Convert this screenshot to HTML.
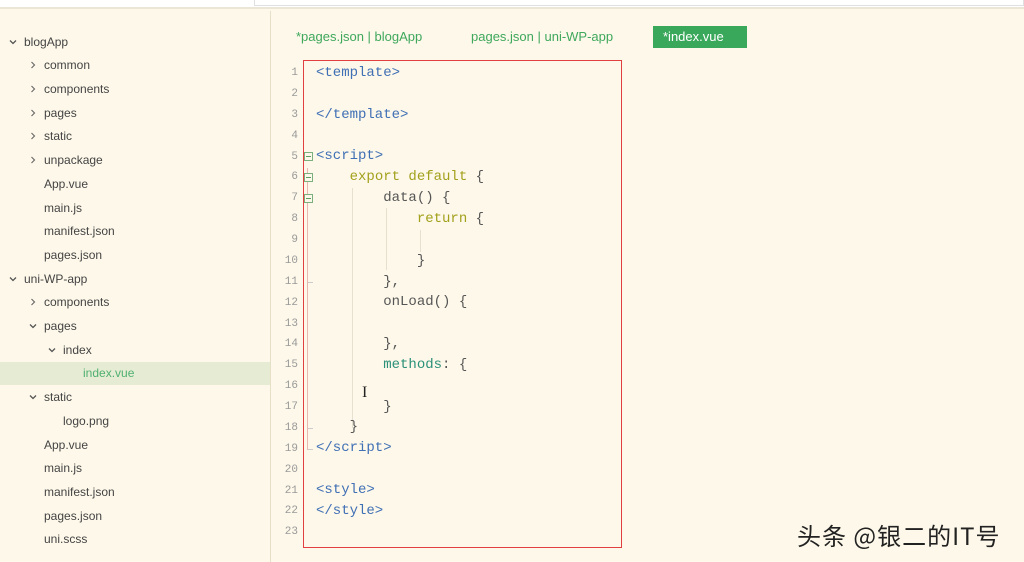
<!DOCTYPE html>
<html><head><meta charset="utf-8"><style>
*{margin:0;padding:0;box-sizing:border-box}
body{width:1024px;height:562px;overflow:hidden;background:#fdf8e9;position:relative;font-family:"Liberation Sans","Noto Sans CJK SC",sans-serif}
.top{position:absolute;left:0;top:0;width:1024px;height:9px;background:#fff;border-bottom:2px solid #ebe6d6}
.topbox{position:absolute;left:254px;top:0;width:770px;height:6px;border:1px solid #e0e0e0;border-top:none;background:#fff}
.side{position:absolute;left:0;top:11px;width:271px;height:551px;border-right:1px solid #e6e0c8}
.it{position:absolute;font-size:12px;color:#444;height:23px;line-height:23px;white-space:nowrap}
.ar{position:absolute;width:8px;height:8px}
.sel{position:absolute;left:0;top:362px;width:270px;height:23px;background:#e6ebd3}
.tab{position:absolute;top:26px;font-size:13px;color:#3fa85d;height:22px;line-height:22px}
.act{background:#3aa85b;color:#fff;left:653px;width:94px;padding-left:10px}
.box{position:absolute;left:303px;top:60px;width:319px;height:488px;border:1px solid #e04040}
.ln{position:absolute;left:276px;width:22px;text-align:right;font-family:"Liberation Mono",monospace;font-size:11px;color:#999}
.cd{position:absolute;left:316px;font-family:"Liberation Mono",monospace;font-size:14px;color:#555;white-space:pre;line-height:20px}
.t{color:#3f6fb5}.k{color:#a3a01c}.m{color:#2a9078}
.fold{position:absolute;left:304px;width:9px;height:9px;border:1px solid #7ab07e;background:#fdf8e9}
.fold:after{content:"";position:absolute;left:1px;top:3px;width:5px;height:1px;background:#5aa060}
.g{position:absolute;width:1px;background:#e6e1cf}
.wm{position:absolute;left:797px;top:517px;font-size:24px;letter-spacing:1px;color:#222;font-family:"Noto Sans CJK SC",sans-serif}
</style></head><body>
<svg width="0" height="0" style="position:absolute"><defs>
<symbol id="r" viewBox="0 0 8 8"><path d="M2.5 1 L5.5 4 L2.5 7" fill="none" stroke="#666" stroke-width="1.1"/></symbol>
<symbol id="d" viewBox="0 0 8 8"><path d="M1 2.5 L4 5.5 L7 2.5" fill="none" stroke="#555" stroke-width="1.3"/></symbol>
</defs></svg>
<div class="top"></div><div class="topbox"></div>
<div class="side"></div>
<div class="sel"></div>
<svg class="ar" style="left:9px;top:38px"><use href="#d"/></svg><div class="it" style="left:24px;top:31px">blogApp</div>
<svg class="ar" style="left:29px;top:61px"><use href="#r"/></svg><div class="it" style="left:44px;top:54px">common</div>
<svg class="ar" style="left:29px;top:85px"><use href="#r"/></svg><div class="it" style="left:44px;top:78px">components</div>
<svg class="ar" style="left:29px;top:109px"><use href="#r"/></svg><div class="it" style="left:44px;top:102px">pages</div>
<svg class="ar" style="left:29px;top:132px"><use href="#r"/></svg><div class="it" style="left:44px;top:125px">static</div>
<svg class="ar" style="left:29px;top:156px"><use href="#r"/></svg><div class="it" style="left:44px;top:149px">unpackage</div>
<div class="it" style="left:44px;top:173px">App.vue</div>
<div class="it" style="left:44px;top:197px">main.js</div>
<div class="it" style="left:44px;top:220px">manifest.json</div>
<div class="it" style="left:44px;top:244px">pages.json</div>
<svg class="ar" style="left:9px;top:275px"><use href="#d"/></svg><div class="it" style="left:24px;top:268px">uni-WP-app</div>
<svg class="ar" style="left:29px;top:298px"><use href="#r"/></svg><div class="it" style="left:44px;top:291px">components</div>
<svg class="ar" style="left:29px;top:322px"><use href="#d"/></svg><div class="it" style="left:44px;top:315px">pages</div>
<svg class="ar" style="left:48px;top:346px"><use href="#d"/></svg><div class="it" style="left:63px;top:339px">index</div>
<div class="it" style="left:83px;top:362px;color:#4fb070">index.vue</div>
<svg class="ar" style="left:29px;top:393px"><use href="#d"/></svg><div class="it" style="left:44px;top:386px">static</div>
<div class="it" style="left:63px;top:410px">logo.png</div>
<div class="it" style="left:44px;top:434px">App.vue</div>
<div class="it" style="left:44px;top:457px">main.js</div>
<div class="it" style="left:44px;top:481px">manifest.json</div>
<div class="it" style="left:44px;top:505px">pages.json</div>
<div class="it" style="left:44px;top:528px">uni.scss</div>

<div class="tab" style="left:296px">*pages.json | blogApp</div>
<div class="tab" style="left:471px">pages.json | uni-WP-app</div>
<div class="tab act">*index.vue</div>

<div class="box"></div>
<div class="g" style="left:352px;top:188px;height:240px"></div>
<div class="g" style="left:386px;top:208px;height:62px"></div>
<div class="g" style="left:420px;top:230px;height:22px"></div>
<div class="g" style="left:307px;top:168px;height:282px;background:#e8b8b0"></div>
<div class="g" style="left:308px;top:282px;width:5px;height:1px;background:#ccc"></div>
<div class="g" style="left:308px;top:428px;width:5px;height:1px;background:#ccc"></div>
<div class="g" style="left:308px;top:449px;width:5px;height:1px;background:#ccc"></div>
<div class="fold" style="top:152px"></div>
<div class="fold" style="top:173px"></div>
<div class="fold" style="top:194px"></div>

<div class="ln" style="top:67px">1</div><div class="ln" style="top:88px">2</div><div class="ln" style="top:109px">3</div><div class="ln" style="top:130px">4</div><div class="ln" style="top:151px">5</div><div class="ln" style="top:171px">6</div><div class="ln" style="top:192px">7</div><div class="ln" style="top:213px">8</div><div class="ln" style="top:234px">9</div><div class="ln" style="top:255px">10</div><div class="ln" style="top:276px">11</div><div class="ln" style="top:297px">12</div><div class="ln" style="top:318px">13</div><div class="ln" style="top:338px">14</div><div class="ln" style="top:359px">15</div><div class="ln" style="top:380px">16</div><div class="ln" style="top:401px">17</div><div class="ln" style="top:422px">18</div><div class="ln" style="top:443px">19</div><div class="ln" style="top:464px">20</div><div class="ln" style="top:485px">21</div><div class="ln" style="top:505px">22</div><div class="ln" style="top:526px">23</div>

<div class="cd" style="top:63px"><span class="t">&lt;template&gt;</span></div>
<div class="cd" style="top:105px"><span class="t">&lt;/template&gt;</span></div>
<div class="cd" style="top:146px"><span class="t">&lt;script&gt;</span></div>
<div class="cd" style="top:167px">    <span class="k">export default</span> {</div>
<div class="cd" style="top:188px">        data() {</div>
<div class="cd" style="top:209px">            <span class="k">return</span> {</div>
<div class="cd" style="top:251px">            }</div>
<div class="cd" style="top:272px">        },</div>
<div class="cd" style="top:292px">        onLoad() {</div>
<div class="cd" style="top:334px">        },</div>
<div class="cd" style="top:355px">        <span class="m">methods</span>: {</div>
<div class="cd" style="top:397px">        }</div>
<div class="cd" style="top:417px">    }</div>
<div class="cd" style="top:438px"><span class="t">&lt;/script&gt;</span></div>
<div class="cd" style="top:480px"><span class="t">&lt;style&gt;</span></div>
<div class="cd" style="top:501px"><span class="t">&lt;/style&gt;</span></div>
<div style="position:absolute;left:362px;top:384px;font-size:16px;color:#222;font-family:'Liberation Serif',serif">I</div>

<div class="wm">头条 @银二的IT号</div>
</body></html>
